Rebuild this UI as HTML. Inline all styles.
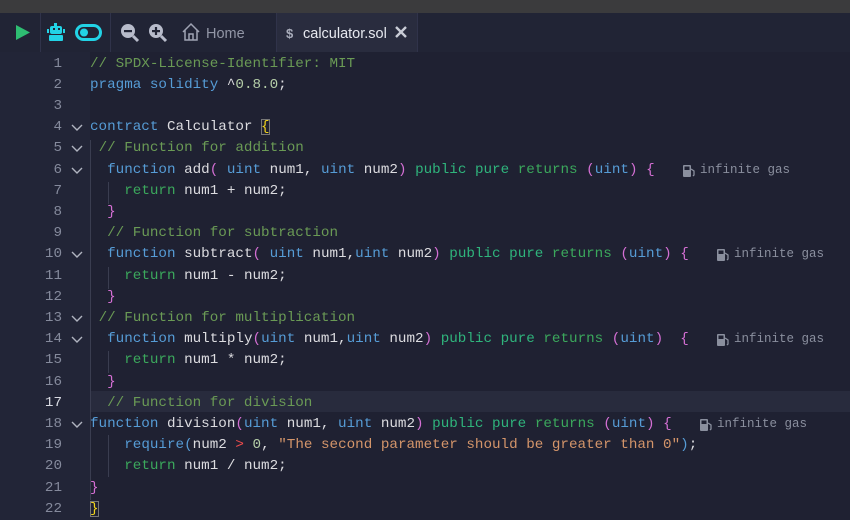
<!DOCTYPE html>
<html><head><meta charset="utf-8"><style>
*{margin:0;padding:0;box-sizing:border-box}
body{width:850px;height:520px;background:#1f2132;overflow:hidden;position:relative;font-family:"Liberation Sans",sans-serif}
#top{position:absolute;left:0;top:0;width:850px;height:13px;background:#3b3b3d}
#tabs{position:absolute;left:0;top:13px;width:850px;height:39px;background:#212435}
.sep{position:absolute;top:13px;width:1px;height:39px;background:#30334a}
#gut{position:absolute;left:0;top:52px;width:90px;height:468px;background:#222537}
.ln{position:absolute;left:0;width:62px;text-align:right;font:14.25px "Liberation Mono",monospace;color:#858a9c;line-height:21.2px}
.fold{position:absolute;left:70px;width:14px;height:21px}
.row{position:absolute;left:90px;font:14.25px/21.2px "Liberation Mono",monospace;color:#dcdce0;white-space:pre}
.c{color:#6a9a55}.k{color:#569cd6}.g{color:#2fb47c}.r{color:#3ba85c}.p{color:#d46fd4}.y{color:#f2d51c}.s{color:#d4956a}.n{color:#b5cea8}.red{color:#f14c4c}
.gas{position:absolute;font:12.5px "Liberation Mono",monospace;color:#8a8f9e;line-height:21.2px}
.guide{position:absolute;width:1px;background:#3a3d50}
</style></head><body>
<div id="top"></div>
<div id="tabs"></div>
<div class="sep" style="left:40px"></div>
<div class="sep" style="left:110px"></div>
<div class="sep" style="left:276px"></div>
<div style="position:absolute;left:277px;top:13px;width:140px;height:39px;background:#292c3e"></div>
<div class="sep" style="left:417px"></div>
<svg style="position:absolute;left:0;top:13px" width="420" height="39">
<polygon points="16,12 16,27 30,19.5" fill="#2ebd72"/>
<g fill="#22d3e6"><rect x="54" y="10" width="3" height="3"/><rect x="50" y="13" width="12" height="8" rx="2"/><rect x="49" y="22" width="14" height="6" rx="1"/><rect x="47" y="16" width="2" height="4"/><rect x="63" y="16" width="2" height="4"/></g>
<rect x="53" y="15" width="2" height="2" fill="#212435"/><rect x="58" y="15" width="2" height="2" fill="#212435"/>
<rect x="76.5" y="12.5" width="24" height="14" rx="7" fill="none" stroke="#22d3e6" stroke-width="3"/>
<circle cx="84" cy="19.5" r="4" fill="#22d3e6"/>
<circle cx="128" cy="18" r="7" fill="#b8bccb"/><rect x="124" y="17" width="8" height="2.2" fill="#212435"/><line x1="133" y1="23" x2="138" y2="28" stroke="#b8bccb" stroke-width="3"/>
<circle cx="156" cy="18" r="7" fill="#b8bccb"/><rect x="152" y="17" width="8" height="2.2" fill="#212435"/><rect x="154.9" y="14" width="2.2" height="8" fill="#212435"/><line x1="161" y1="23" x2="166" y2="28" stroke="#b8bccb" stroke-width="3"/>
<path d="M183 19 L191 11 L199 19 M185 17 V27 H197 V17 M189 27 V21 H193 V27" fill="none" stroke="#9fa3b3" stroke-width="1.5"/>
<text x="206" y="25" font-family="Liberation Sans" font-size="14.5" fill="#9296a6">Home</text>
<text x="286" y="25" font-family="Liberation Sans" font-size="13" font-weight="bold" fill="#a9adbb">$</text>
<text x="303" y="25" font-family="Liberation Sans" font-size="14.5" fill="#e6e8ef">calculator.sol</text>
<path d="M396 14 L406 24 M406 14 L396 24" stroke="#c9ccd6" stroke-width="2.4"/>
</svg>
<div id="gut"></div>
<div style="position:absolute;left:90px;top:391px;width:760px;height:21px;background:#282b3d"></div>
<div class="guide" style="left:90px;top:140px;height:360px"></div>
<div class="guide" style="left:108px;top:182px;height:22px"></div>
<div class="guide" style="left:108px;top:267px;height:22px"></div>
<div class="guide" style="left:108px;top:351px;height:22px"></div>
<div class="guide" style="left:108px;top:435px;height:42px"></div>
<div id="lines"></div>
<script>
var L=[
'<span class="c">// SPDX-License-Identifier: MIT</span>',
'<span class="k">pragma</span> <span class="k">solidity</span> ^<span class="n">0.8.0</span>;',
'',
'<span class="k">contract</span> Calculator <span class="y" style="outline:1px solid #777;outline-offset:-1px">{</span>',
' <span class="c">// Function for addition</span>',
'  <span class="k">function</span> add<span class="p">(</span> <span class="k">uint</span> num1, <span class="k">uint</span> num2<span class="p">)</span> <span class="g">public</span> <span class="g">pure</span> <span class="r">returns</span> <span class="p">(</span><span class="k">uint</span><span class="p">)</span> <span class="p">{</span>',
'    <span class="r">return</span> num1 + num2;',
'  <span class="p">}</span>',
'  <span class="c">// Function for subtraction</span>',
'  <span class="k">function</span> subtract<span class="p">(</span> <span class="k">uint</span> num1,<span class="k">uint</span> num2<span class="p">)</span> <span class="g">public</span> <span class="g">pure</span> <span class="r">returns</span> <span class="p">(</span><span class="k">uint</span><span class="p">)</span> <span class="p">{</span>',
'    <span class="r">return</span> num1 - num2;',
'  <span class="p">}</span>',
' <span class="c">// Function for multiplication</span>',
'  <span class="k">function</span> multiply<span class="p">(</span><span class="k">uint</span> num1,<span class="k">uint</span> num2<span class="p">)</span> <span class="g">public</span> <span class="g">pure</span> <span class="r">returns</span> <span class="p">(</span><span class="k">uint</span><span class="p">)</span>  <span class="p">{</span>',
'    <span class="r">return</span> num1 * num2;',
'  <span class="p">}</span>',
'  <span class="c">// Function for division</span>',
'<span class="k">function</span> division<span class="p">(</span><span class="k">uint</span> num1, <span class="k">uint</span> num2<span class="p">)</span> <span class="g">public</span> <span class="g">pure</span> <span class="r">returns</span> <span class="p">(</span><span class="k">uint</span><span class="p">)</span> <span class="p">{</span>',
'    <span class="k">require</span><span class="k">(</span>num2 <span class="red">&gt;</span> <span class="n">0</span>, <span class="s">"The second parameter should be greater than 0"</span><span class="k">)</span>;',
'    <span class="r">return</span> num1 / num2;',
'<span class="p">}</span>',
'<span class="y" style="outline:1px solid #777;outline-offset:-1px">}</span>'];
var folds=[4,5,6,10,13,14,18];var h='';
for(var i=0;i<L.length;i++){var t=53.5+i*21.2;
h+='<div class="ln" style="top:'+t+'px;'+(i==16?'color:#d8dae2':'')+'">'+(i+1)+'</div>';
h+='<div class="row" style="top:'+t+'px">'+L[i]+'</div>';
if(folds.indexOf(i+1)>=0)h+='<svg class="fold" style="top:'+t+'px" viewBox="0 0 14 21"><path d="M2 8 L7 13 L12 8" fill="none" stroke="#b0b4c0" stroke-width="1.4"/></svg>';}
function gas(x,ln){var t=53.5+(ln-1)*21.2;return '<svg style="position:absolute;left:'+x+'px;top:'+(t+4)+'px" width="14" height="14"><rect x="1" y="1" width="8" height="12" rx="1" fill="#8a8f9e"/><rect x="2.5" y="2.5" width="5" height="3.5" fill="#1f2132"/><path d="M9 5 L12 7 V11 L11 12" fill="none" stroke="#8a8f9e" stroke-width="1.3"/></svg><div class="gas" style="left:'+(x+18)+'px;top:'+t+'px">infinite gas</div>';}
h+=gas(682,6)+gas(716,10)+gas(716,14)+gas(699,18);
document.getElementById('lines').innerHTML=h;
</script>
</body></html>
